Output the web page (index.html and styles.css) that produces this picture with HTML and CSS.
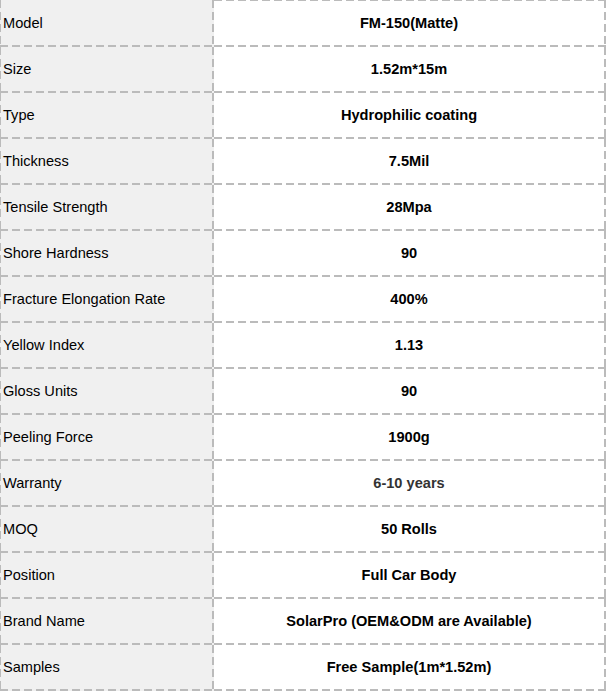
FILE: index.html
```html
<!DOCTYPE html>
<html>
<head>
<meta charset="utf-8">
<link rel="stylesheet" href="styles.css">
</head>
<body>
<table class="spec">
  <colgroup>
    <col class="col-k">
    <col class="col-v">
  </colgroup>
  <tbody>
    <tr><td class="k">Model</td><td class="v">FM-150(Matte)</td></tr>
    <tr><td class="k">Size</td><td class="v">1.52m*15m</td></tr>
    <tr><td class="k">Type</td><td class="v">Hydrophilic coating</td></tr>
    <tr><td class="k">Thickness</td><td class="v">7.5Mil</td></tr>
    <tr><td class="k">Tensile Strength</td><td class="v">28Mpa</td></tr>
    <tr><td class="k">Shore Hardness</td><td class="v">90</td></tr>
    <tr><td class="k">Fracture Elongation Rate</td><td class="v">400%</td></tr>
    <tr><td class="k">Yellow Index</td><td class="v">1.13</td></tr>
    <tr><td class="k">Gloss Units</td><td class="v">90</td></tr>
    <tr><td class="k">Peeling Force</td><td class="v">1900g</td></tr>
    <tr><td class="k">Warranty</td><td class="v muted">6-10 years</td></tr>
    <tr><td class="k">MOQ</td><td class="v">50 Rolls</td></tr>
    <tr><td class="k">Position</td><td class="v">Full Car Body</td></tr>
    <tr><td class="k">Brand Name</td><td class="v">SolarPro (OEM&amp;ODM are Available)</td></tr>
    <tr><td class="k">Samples</td><td class="v">Free Sample(1m*1.52m)</td></tr>
  </tbody>
</table>
</body>
</html>
```
FILE: styles.css
```css
html, body {
  margin: 0;
  padding: 0;
  background: #ffffff;
}
.spec {
  border-collapse: separate;
  border-spacing: 0;
  table-layout: fixed;
  width: 606px;
  font-family: "Liberation Sans", Arial, sans-serif;
  font-size: 14.6px;
  color: #000;
}
.col-k { width: 214px; }
.col-v { width: 392px; }

.spec tr { height: 46px; }
.spec tr:first-child { height: 47px; }

.spec td {
  padding: 0 2px 2px 0;
  vertical-align: middle;
  white-space: nowrap;
  background:
    repeating-linear-gradient(90deg, #bbbbbb 0 8px, transparent 8px 12px) left bottom / 100% 2px no-repeat,
    repeating-linear-gradient(180deg, #bbbbbb 0 8px, transparent 8px 12px) right top / 2px 100% no-repeat,
    #ffffff;
}
.spec tr:first-child td {
  padding-top: 1px;
}
.spec tr:first-child td.v {
  background:
    repeating-linear-gradient(90deg, #bbbbbb 0 8px, transparent 8px 12px) left bottom / 100% 2px no-repeat,
    repeating-linear-gradient(90deg, #bbbbbb 0 8px, transparent 8px 12px) left top / 100% 1px no-repeat,
    repeating-linear-gradient(180deg, #bbbbbb 0 8px, transparent 8px 12px) right top / 2px 100% no-repeat,
    #ffffff;
}
.spec td.k {
  padding-left: 3px;
  text-align: left;
  background:
    repeating-linear-gradient(90deg, #bbbbbb 0 8px, transparent 8px 12px) left bottom / 100% 2px no-repeat,
    repeating-linear-gradient(180deg, #bbbbbb 0 8px, transparent 8px 12px) right top / 2px 100% no-repeat,
    repeating-linear-gradient(180deg, #bbbbbb 0 8px, transparent 8px 12px) left top / 1px 100% no-repeat,
    #f0f0f0;
}
.spec td.v {
  text-align: center;
  font-weight: bold;
}
.spec td.muted {
  color: #333333;
}
```
